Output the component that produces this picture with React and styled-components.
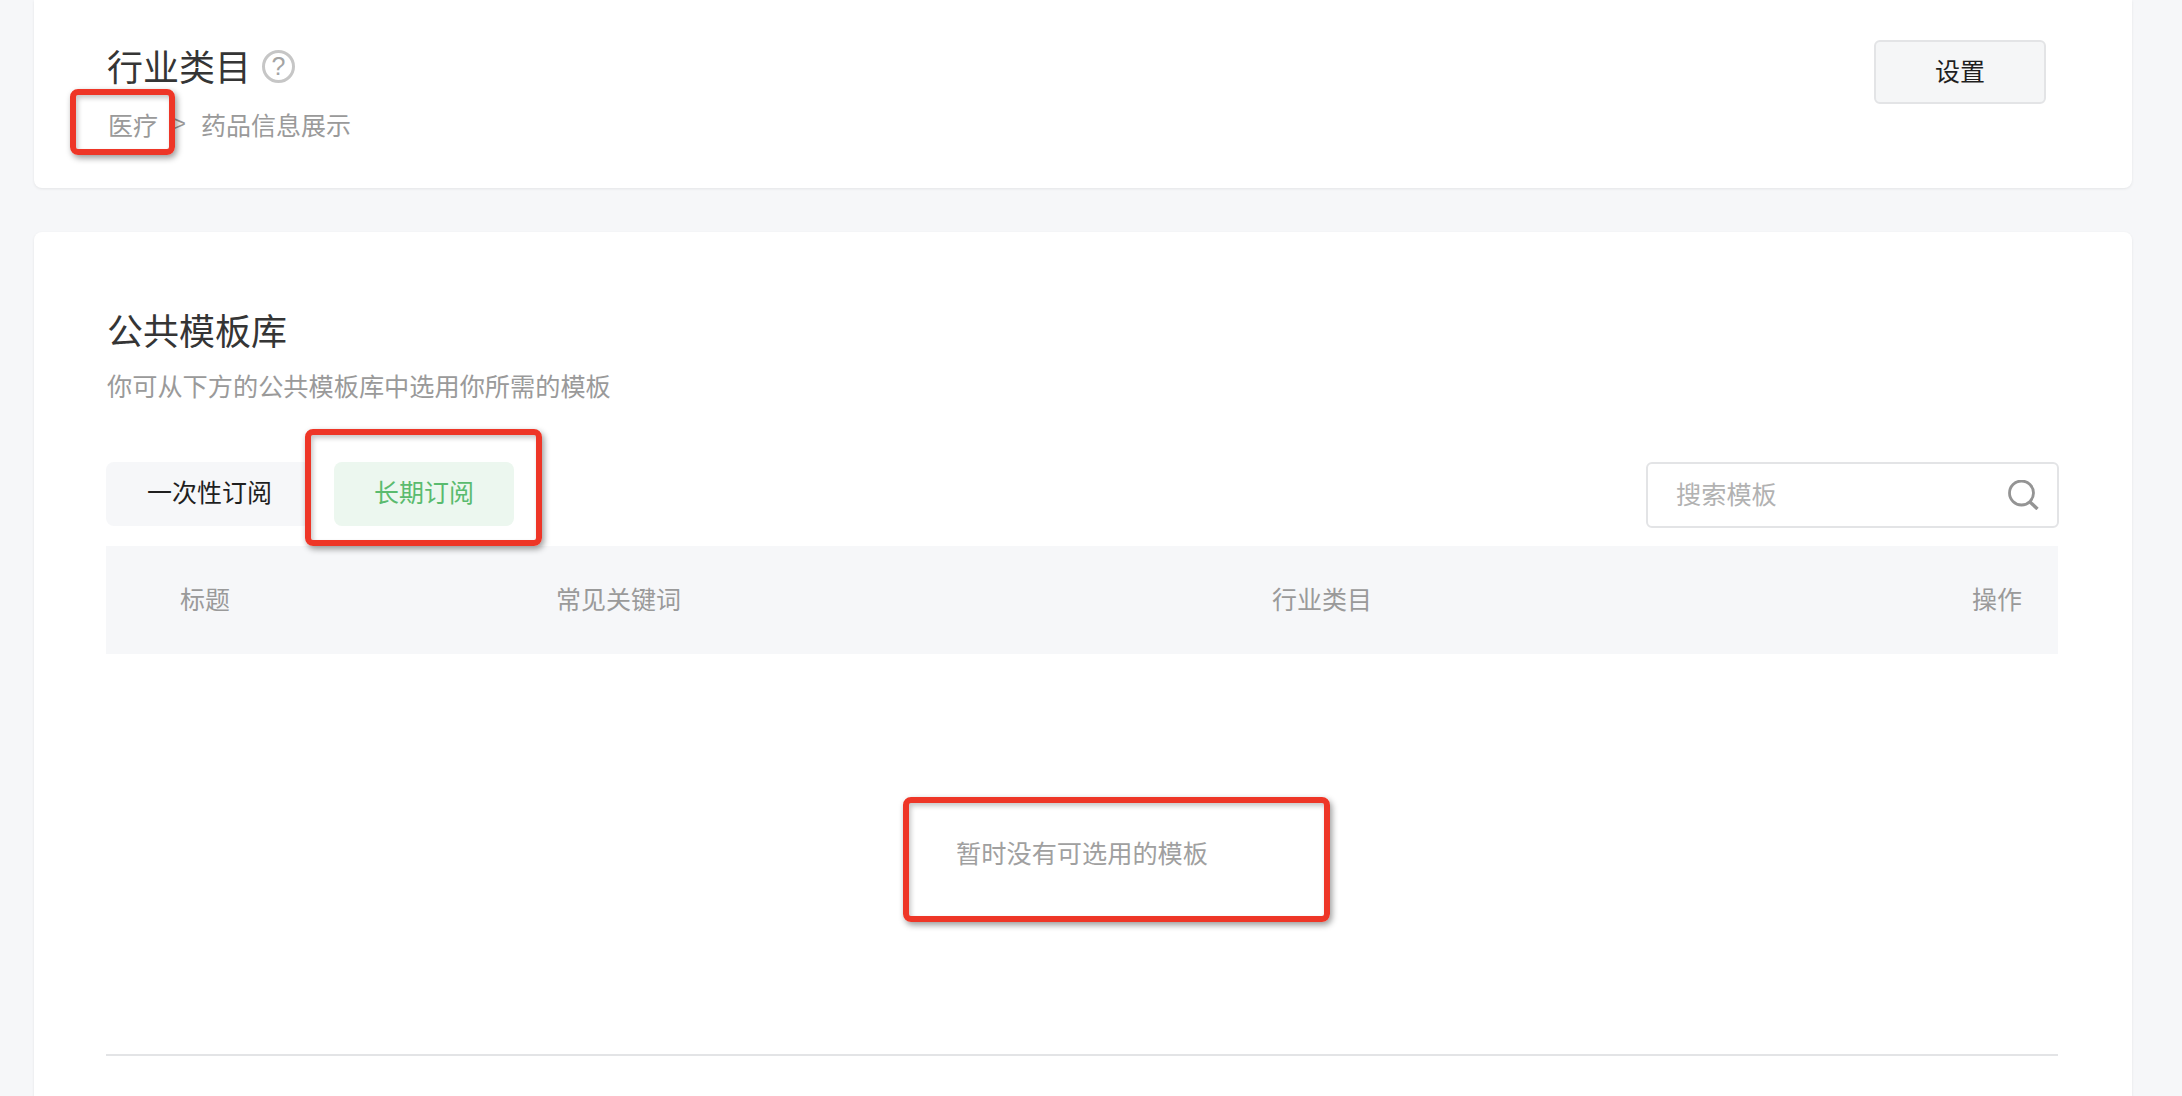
import React from "react";
import styled, { createGlobalStyle } from "styled-components";

const Global = createGlobalStyle`
  html, body { margin: 0; padding: 0; height: 1096px; overflow: hidden; background: #f6f7f9; }
  body { font-family: "Noto Sans CJK SC", "Liberation Sans", sans-serif; }
  * { box-sizing: border-box; }
`;

const Page = styled.div`
  display: flex;
  flex-direction: column;
  gap: 44px;
  padding: 0 50px 0 34px;
`;

const Card = styled.section`
  background: #fff;
  border-radius: 0 0 8px 8px;
  box-shadow: 0 1px 3px rgba(0, 0, 0, 0.08);
`;

const CategoryCard = styled(Card)`
  height: 188px;
  padding: 41px 86px 0 73px;
  display: flex;
  justify-content: space-between;
  align-items: flex-start;
`;

const LibraryCard = styled(Card)`
  border-radius: 8px 8px 0 0;
  padding: 73px 74px 120px 72px;
`;

const TitleRow = styled.div`
  display: flex;
  align-items: center;
  gap: 11px;
`;

const Title = styled.h2`
  margin: 0;
  font-size: 36px;
  line-height: 48px;
  font-weight: 400;
  color: #353535;
`;

const LibraryTitle = styled(Title)`
  margin-left: 1px;
`;

const HelpMark = styled.span`
  width: 33px;
  height: 33px;
  margin-top: 2px;
  border: 3px solid #c6c6c6;
  border-radius: 50%;
  display: flex;
  align-items: center;
  justify-content: center;
  font-family: "Liberation Sans", sans-serif;
  font-size: 25px;
  color: #a4a4a4;
`;

const Breadcrumb = styled.div`
  position: relative;
  display: flex;
  align-items: center;
  margin-top: 17px;
  font-size: 25px;
  line-height: 36px;
  color: #9a9a9a;
`;

const Crumb = styled.span`
  margin-left: 1px;
`;

const Chevron = styled.span`
  margin: 0 15px 0 15px;
  font-family: "Liberation Sans", sans-serif;
  font-size: 22px;
`;

const GhostButton = styled.button`
  width: 172px;
  height: 64px;
  margin-top: -1px;
  background: #f5f6f7;
  border: 2px solid #e3e4e6;
  border-radius: 6px;
  font: inherit;
  font-size: 25px;
  color: #1f1f1f;
  padding: 0 0 4px;
`;

const Subtitle = styled.p`
  margin: 14px 0 0 1px;
  font-size: 25.2px;
  line-height: 36px;
  color: #9a9a9a;
`;

const Toolbar = styled.div`
  margin-top: 59px;
  height: 84px;
  display: flex;
  justify-content: space-between;
  align-items: flex-start;
`;

const TabBar = styled.div`
  position: relative;
  display: flex;
  gap: 23px;
`;

const Tab = styled.div`
  height: 64px;
  padding: 0 0 6px ${(p) => (p.$active ? "0" : "2px")};
  border-radius: 8px;
  display: flex;
  align-items: center;
  justify-content: center;
  white-space: nowrap;
  font-size: 25px;
  background: ${(p) => (p.$active ? "#ecf7ef" : "#f6f7f9")};
  color: ${(p) => (p.$active ? "#5abb6e" : "#1f1f1f")};
  width: ${(p) => (p.$active ? "180px" : "205px")};
`;

const SearchBox = styled.div`
  margin-right: -1px;
  width: 413px;
  height: 66px;
  border: 2px solid #e3e4e6;
  border-radius: 6px;
  background: #fff;
  padding: 0 18px 4px 28px;
  display: flex;
  align-items: center;
  justify-content: space-between;
`;

const Placeholder = styled.span`
  font-size: 25.2px;
  color: #b2b2b2;
`;

const IconSlot = styled.svg`
  margin-bottom: -4px;
`;

const TableHead = styled.div`
  height: 108px;
  background: #f6f7f9;
  padding: 0 36px 5px 74px;
  display: grid;
  grid-template-columns: 376px 716px 1fr auto;
  align-items: center;
  font-size: 25px;
  color: #9a9a9a;
`;

const EmptyState = styled.div`
  height: 402px;
  border-bottom: 2px solid #e3e4e6;
  padding-bottom: 4px;
  display: flex;
  align-items: center;
  justify-content: center;
`;

const EmptyText = styled.span`
  position: relative;
  font-size: 25.2px;
  line-height: 36px;
  color: #a0a0a0;
`;

const Highlight = styled.div`
  position: absolute;
  left: ${(p) => p.$left}px;
  top: ${(p) => p.$top}px;
  width: ${(p) => p.$width}px;
  height: ${(p) => p.$height}px;
  border: 6px solid #ee3627;
  border-radius: 8px;
  box-shadow: 2px 3px 6px rgba(0, 0, 0, 0.4), inset 2px 3px 5px rgba(0, 0, 0, 0.22);
  pointer-events: none;
`;

const SearchIcon = () => (
  <IconSlot width="31" height="30" viewBox="0 0 31 30" fill="none" stroke="#949494" strokeWidth="2.8">
    <circle cx="13.5" cy="13" r="12" />
    <path d="M22 22 L29.5 29" strokeWidth="3.4" />
  </IconSlot>
);

export default function App() {
  return (
    <>
      <Global />
      <Page>
        <CategoryCard>
          <div>
            <TitleRow>
              <Title>行业类目</Title>
              <HelpMark>?</HelpMark>
            </TitleRow>
            <Breadcrumb>
              <Crumb>医疗</Crumb>
              <Chevron>&gt;</Chevron>
              <span>药品信息展示</span>
              <Highlight $left={-37} $top={-17} $width={105} $height={66} />
            </Breadcrumb>
          </div>
          <GhostButton>设置</GhostButton>
        </CategoryCard>
        <LibraryCard>
          <LibraryTitle>公共模板库</LibraryTitle>
          <Subtitle>你可从下方的公共模板库中选用你所需的模板</Subtitle>
          <Toolbar>
            <TabBar>
              <Tab>一次性订阅</Tab>
              <Tab $active>长期订阅</Tab>
              <Highlight $left={199} $top={-33} $width={237} $height={117} />
            </TabBar>
            <SearchBox>
              <Placeholder>搜索模板</Placeholder>
              <SearchIcon />
            </SearchBox>
          </Toolbar>
          <TableHead>
            <span>标题</span>
            <span>常见关键词</span>
            <span>行业类目</span>
            <span>操作</span>
          </TableHead>
          <EmptyState>
            <EmptyText>
              暂时没有可选用的模板
              <Highlight $left={-53} $top={-37} $width={427} $height={125} />
            </EmptyText>
          </EmptyState>
        </LibraryCard>
      </Page>
    </>
  );
}
